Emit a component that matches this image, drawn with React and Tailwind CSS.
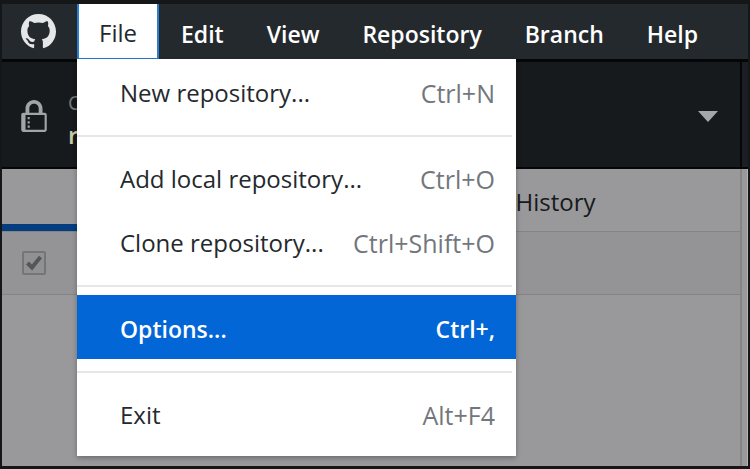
const menus = ["Edit", "View", "Repository", "Branch", "Help"];

function GitHubMark() {
  return (
    <svg viewBox="0 0 16 16" className="size-[35px]" fill="#e4e6e8" aria-hidden="true">
      <path d="M8 0C3.58 0 0 3.58 0 8c0 3.54 2.29 6.53 5.47 7.59.4.07.55-.17.55-.38 0-.19-.01-.82-.01-1.49-2.01.37-2.53-.49-2.69-.94-.09-.23-.48-.94-.82-1.13-.28-.15-.68-.52-.01-.53.63-.01 1.08.58 1.23.82.72 1.21 1.87.87 2.33.66.07-.52.28-.87.51-1.07-1.78-.2-3.64-.89-3.64-3.95 0-.87.31-1.59.82-2.15-.08-.2-.36-1.02.08-2.12 0 0 .67-.21 2.2.82.64-.18 1.32-.27 2-.27s1.36.09 2 .27c1.53-1.04 2.2-.82 2.2-.82.44 1.1.16 1.92.08 2.12.51.56.82 1.27.82 2.15 0 3.07-1.87 3.75-3.65 3.95.29.25.54.73.54 1.48 0 1.07-.01 1.93-.01 2.2 0 .21.15.46.55.38A8.01 8.01 0 0 0 16 8c0-4.42-3.58-8-8-8z" />
    </svg>
  );
}

function LockIcon() {
  return (
    <svg viewBox="0 0 12 16" className="h-[34px] w-[26px] shrink-0" fill="#a3a4a6" aria-hidden="true">
      <path d="M4 13H3v-1h1v1zm8-6v7c0 .55-.45 1-1 1H1c-.55 0-1-.45-1-1V7c0-.55.45-1 1-1h1V4c0-2.2 1.8-4 4-4s4 1.8 4 4v2h1c.55 0 1 .45 1 1zM3.8 6h4.41V4c0-1.22-.98-2.2-2.2-2.2-1.22 0-2.2.98-2.2 2.2v2H3.8zM11 7H2v7h9V7zM4 8H3v1h1V8zm0 2H3v1h1v-1z" />
    </svg>
  );
}

function MenuItem({ label, shortcut, active }) {
  return (
    <button
      role="menuitem"
      className={
        active
          ? "flex h-16 w-full items-center justify-between bg-[#0366d6] pt-1 pr-[21px] pl-[43px] text-[23px] font-semibold text-white"
          : "flex h-16 w-full items-center justify-between pt-1 pr-[21px] pl-[43px] text-[#24292e]"
      }
    >
      <span>{label}</span>
      <span className={active ? "text-white" : "text-[25px] text-[#73777c]"}>{shortcut}</span>
    </button>
  );
}

function Separator() {
  return <div role="separator" className="mt-3 mb-2 h-[2px] w-full border-r-4 border-white bg-[#e4e6e9]" />;
}

function FileMenu() {
  return (
    <div
      role="menu"
      aria-label="File"
      className="absolute top-full left-0 z-10 w-[439px] bg-white pb-[11px] whitespace-nowrap shadow-[0_2px_5px_rgba(0,0,0,0.3)]"
    >
      <MenuItem label="New repository..." shortcut="Ctrl+N" />
      <Separator />
      <MenuItem label="Add local repository..." shortcut="Ctrl+O" />
      <MenuItem label="Clone repository..." shortcut="Ctrl+Shift+O" />
      <Separator />
      <MenuItem label="Options..." shortcut="Ctrl+," active />
      <Separator />
      <MenuItem label="Exit" shortcut="Alt+F4" />
    </div>
  );
}

export default function App() {
  return (
    <div className="flex min-h-screen flex-col border-x-2 border-t-4 border-b-[3px] border-[#151617] bg-[#99999b] font-['Open_Sans','Noto_Sans',sans-serif] text-[24px] leading-8">
      <header className="flex h-[55px] bg-[#24292e]">
        <div className="flex w-[75px] items-center pl-[19px]">
          <GitHubMark />
        </div>
        <nav className="flex gap-px">
          <div className="relative flex">
            <button
              aria-haspopup="menu"
              aria-expanded="true"
              className="w-[82px] border-x-2 border-b border-[#2b7cd3] bg-white pt-1 text-[#24292e]"
            >
              File
            </button>
            <FileMenu />
          </div>
          {menus.map((name) => (
            <button key={name} className="px-[21px] pt-1 text-[23px] font-semibold text-white">
              {name}
            </button>
          ))}
        </nav>
      </header>

      <div className="flex flex-1">
        <main className="flex min-w-0 flex-1 flex-col">
          <button
            aria-label="Current repository"
            className="flex h-[110px] items-center gap-[21px] border-t-[3px] border-b-2 border-[#050607] bg-[#171a1d] pt-1 pr-[22px] pl-[19px] text-left"
          >
            <LockIcon />
            <span className="flex flex-1 flex-col pt-1">
              <span className="text-[20px] text-[#77797d]">C</span>
              <span className="font-semibold text-[#c9cba8]">r</span>
            </span>
            <svg viewBox="0 0 20 11" className="h-[11px] w-5" fill="#a5a6a8" aria-hidden="true">
              <path d="M0 0h20L10 11z" />
            </svg>
          </button>
          <div role="tablist" className="flex h-[63px] border-b border-[#838486]">
            <button role="tab" aria-selected="true" aria-label="Changes" className="flex-1 border-b-[7px] border-[#043d80]" />
            <button role="tab" aria-selected="false" className="flex-1 pt-1 text-[#17191c]">
              History
            </button>
          </div>
          <label className="flex h-[63px] items-center border-b border-[#838486] bg-[#949496] pl-5">
            <span className="grid size-6 place-items-center">
              <input
                type="checkbox"
                defaultChecked
                aria-label="Include all changes"
                className="col-start-1 row-start-1 size-6 appearance-none rounded-xs border-2 border-[#747577] bg-[#919193]"
              />
              <svg viewBox="0 0 16 16" className="pointer-events-none col-start-1 row-start-1 size-4" fill="none" stroke="#555658" strokeWidth="4" aria-hidden="true">
                <path d="M1.5 8l4.5 4.5L14.5 2" />
              </svg>
            </span>
          </label>
        </main>
        <aside className="flex w-2 flex-col border-l-2 border-[#858587]">
          <div className="-ml-[2px] h-[110px] border-t-[3px] border-b-2 border-l-2 border-[#050607] bg-[#1b1f24]" />
          <div className="flex-1 border-r border-[#b5b5b7]" />
        </aside>
      </div>
    </div>
  );
}
